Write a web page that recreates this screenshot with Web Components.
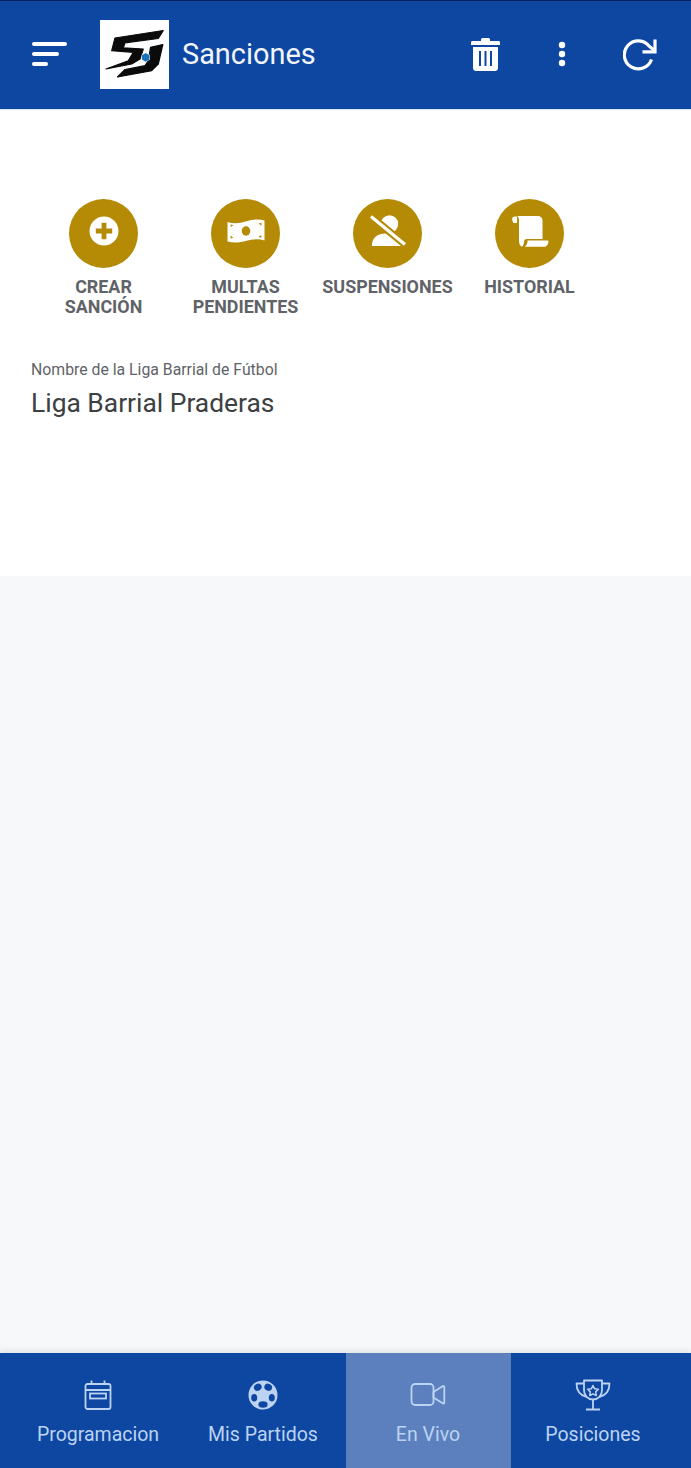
<!DOCTYPE html>
<html lang="es">
<head>
<meta charset="utf-8">
<title>Sanciones</title>
<style>
  html, body { margin: 0; height: 100%; }
  body {
    display: flex;
    flex-direction: column;
    height: 1468px;
    overflow: hidden;
    background: #f7f8fa;
    font-family: Roboto, "Liberation Sans", sans-serif;
  }
</style>
</head>
<body>
  <app-header title-text="Sanciones"></app-header>

  <main-panel>
    <action-list>
      <action-button icon="plus">CREAR<br>SANCIÓN</action-button>
      <action-button icon="money">MULTAS<br>PENDIENTES</action-button>
      <action-button icon="user-off">SUSPENSIONES</action-button>
      <action-button icon="scroll">HISTORIAL</action-button>
    </action-list>
    <league-info label="Nombre de la Liga Barrial de Fútbol" value="Liga Barrial Praderas"></league-info>
  </main-panel>

  <tab-bar>
    <tab-item icon="calendar">Programacion</tab-item>
    <tab-item icon="ball">Mis Partidos</tab-item>
    <tab-item icon="video" active>En Vivo</tab-item>
    <tab-item icon="trophy">Posiciones</tab-item>
  </tab-bar>

<script>
// Icons used by the action buttons and the tab bar.
const icons = {
  plus: `<svg viewBox="0 0 30 30" width="30" height="30">
      <circle cx="15" cy="15" r="14.5" fill="#fff"/>
      <path d="M12.6 6.8h4.8v5.8h5.8v4.8h-5.8v5.8h-4.8v-5.8H6.8v-4.8h5.8z" fill="#b58a05"/>
    </svg>`,
  money: `<svg viewBox="0 0 38 24" width="38" height="24">
      <path d="M.5 3C7 5 13 4.200 19.500 2.200 26 .3 32 -.2 37.500 1.500V21.500C32 19.500 26 20 19.500 21.800 13 23.700 7 24.300 .5 22.500z" fill="#fff"/>
      <ellipse cx="19" cy="12" rx="4.300" ry="4.700" fill="#b58a05"/>
      <path d="M3.500 5.500l3 .5-2.600 2zM34.500 3.800v3L31.700 4.600zM3.500 19.500v-3l2.800 2.300zM34.500 18.800l-3-.9 2.600-2z" fill="#b58a05"/>
    </svg>`,
  'user-off': `<svg viewBox="0 0 38 32" width="38" height="32">
      <circle cx="20.500" cy="9" r="8.700" fill="#fff"/>
      <path d="M3 31c-.6-7.500 5-12.500 13-12.500h9c6 0 10 5 10 12.500z" fill="#fff"/>
      <path d="M1 .7l36 29.600" stroke="#b58a05" stroke-width="7.500" fill="none"/>
      <path d="M2 1.500l34 28" stroke="#fff" stroke-width="3.200" fill="none"/>
    </svg>`,
  scroll: `<svg viewBox="0 0 38 32" width="38" height="32">
      <path d="M1.200 3C2 1.500 4 1 6 1.800V8H2.500C1.500 6.800 1 4.500 1.200 3z" fill="#fff"/>
      <path d="M6 1h21c2.500 0 4.500 2 4.500 4.500V24H16c-2 0-3 1.200-3 3 0 1.700-.6 3.500-2 4.800-1.800-.8-3-3-3-5.500V5.500C8 3.500 7.500 2 6 1z" fill="#fff"/>
      <path d="M16.500 25.500h20.800c.7 2.800-1.300 6.300-4.300 6.300H13.700c2.200-1.500 3-3.700 2.800-6.300z" fill="#fff"/>
    </svg>`,
  calendar: `<svg viewBox="0 0 28 32" width="28" height="32" fill="none" stroke="currentColor" stroke-width="1.800">
      <rect x="1.500" y="5" width="25" height="25" rx="2"/>
      <path d="M7.500 1.500V5M20.500 1.500V5M1.500 11h25"/>
      <rect x="6" y="14.500" width="16" height="5"/>
    </svg>`,
  ball: `<svg viewBox="0 0 30 30" width="30" height="30">
      <circle cx="15" cy="15" r="14.500" fill="currentColor"/>
      <g fill="#0e47a1">
        <ellipse cx="15" cy="24.500" rx="4.600" ry="3.300"/>
        <ellipse cx="6.200" cy="17.800" rx="3" ry="3.800"/>
        <ellipse cx="9.800" cy="7.200" rx="4" ry="3.400" transform="rotate(-30 9.800 7.200)"/>
        <ellipse cx="20.200" cy="7.200" rx="4" ry="3.400" transform="rotate(30 20.200 7.200)"/>
        <ellipse cx="23.800" cy="17.800" rx="3" ry="3.800"/>
      </g>
    </svg>`,
  video: `<svg viewBox="0 0 36 26" width="36" height="26" fill="none" stroke="currentColor" stroke-width="1.800" stroke-linejoin="round">
      <rect x="1.500" y="2" width="22" height="21" rx="3.500"/>
      <path d="M23.500 10l9.500-6a1 1 0 0 1 1.300 1v15.500a1 1 0 0 1-1.300 1l-9.500-6z"/>
    </svg>`,
  trophy: `<svg viewBox="0 0 36 32" width="36" height="32" fill="none" stroke="currentColor" stroke-width="1.800" stroke-linejoin="round">
      <path d="M9 1.500h18v9.500c0 5.500-3.800 9.500-9 9.500s-9-4-9-9.500z"/>
      <path d="M9 4.500H1.500c0 6.500 3 11.500 10 13.500M27 4.500h7.500c0 6.500-3 11.500-10 13.500"/>
      <path d="M18 20.500v9.500M11 30.500h14"/>
      <path d="M18 6.500l1.700 3.300 3.700.5-2.700 2.600.6 3.600-3.300-1.700-3.300 1.700.6-3.600-2.700-2.600 3.700-.5z" stroke-width="1.500"/>
    </svg>`
}

customElements.define('app-header',
  /**
   * The blue bar at the top, with menu, logo, title and actions.
   */
  class extends HTMLElement {
    /**
     * Creates the shadow root and fills it.
     */
    constructor () {
      super()
      this.attachShadow({ mode: 'open' }).innerHTML = `
        <style>
          :host {
            display: flex;
            align-items: center;
            flex: none;
            box-sizing: border-box;
            height: 110px;
            padding-bottom: 2px;
            background: #0e47a1;
            border-top: 1px solid #0a1f5c;
            border-bottom: 1px solid #d5e1f2;
            color: #fff;
          }
          .menu { width: 36px; margin-left: 32px; display: flex; flex-direction: column; gap: 6px; }
          .menu i { display: block; height: 4px; border-radius: 2px; background: #fff; }
          .menu i:nth-child(1) { width: 35px; }
          .menu i:nth-child(2) { width: 27px; }
          .menu i:nth-child(3) { width: 16px; }
          .logo { width: 69px; height: 69px; margin-left: 32px; background: #fff; flex: none; }
          .logo svg { display: block; }
          h1 { margin: 0 0 0 13px; font: 400 28.900px Roboto, sans-serif; flex: 1; color: #f2f6fc; }
          .actions { display: flex; align-items: center; }
          .actions svg { display: block; }
          .trash { margin-right: 58px; }
          .dots { margin-right: 57px; }
          .reload { margin-right: 34px; }
        </style>
        <div class="menu"><i></i><i></i><i></i></div>
        <div class="logo">
          <svg viewBox="0 0 69 69" width="69" height="69">
            <g fill="#0b0b0b" stroke="#0b0b0b" stroke-width="1.200" stroke-linejoin="round">
              <path d="M15 18L63.300 10.500 58.300 18.500 25 22.800 23.300 27.800 43.300 29 40 39 31.700 44 6 49 28.300 40.700 33.300 32.300 11.700 30.700z"/>
              <path d="M50.500 27.300L62.800 24.500 58.300 44 51.700 50.700 17.500 57 25 49.500 45 45.700 48.500 40.700z"/>
            </g>
            <path d="M45.700 32.500l4.200 2.400v4.800l-4.200 2.400-4.200-2.400v-4.800z" fill="#fff"/>
            <path d="M45.700 33l3.800 2.200v4.300l-3.800 2.200-3.800-2.200v-4.300z" fill="#1a74bb"/>
          </svg>
        </div>
        <h1></h1>
        <div class="actions">
          <svg class="trash" viewBox="0 0 29 34" width="29" height="34">
            <path d="M10 2.500C10 1.500 11 1 12 1h5c1 0 2 .5 2 1.500V4h8.500c.8 0 1.500.5 1.500 1.500V8H0V5.500C0 4.500.7 4 1.500 4H10z" fill="#fff"/>
            <path d="M2 10h25v21c0 1.700-1.300 3-3 3H5c-1.700 0-3-1.300-3-3z" fill="#fff"/>
            <path d="M9 14v15M14.500 14v15M20 14v15" stroke="#0e47a1" stroke-width="2" fill="none"/>
          </svg>
          <svg class="dots" viewBox="0 0 8 26" width="8" height="26" fill="#fff">
            <circle cx="4" cy="4" r="3.200"/><circle cx="4" cy="13" r="3.200"/><circle cx="4" cy="22" r="3.200"/>
          </svg>
          <svg class="reload" viewBox="0 0 34 33" width="34" height="33" fill="none" stroke="#fff" stroke-width="3.200">
            <path d="M28.500 21.500A14 14 0 1 1 26.500 8.500L32 13"/>
            <path d="M32 1.500V13.800H19.500"/>
          </svg>
        </div>`
      this.shadowRoot.querySelector('h1').textContent = this.getAttribute('title-text')
    }
  }
)

customElements.define('main-panel',
  /**
   * The white panel below the header.
   */
  class extends HTMLElement {
    /**
     * Creates the shadow root and fills it.
     */
    constructor () {
      super()
      this.attachShadow({ mode: 'open' }).innerHTML = `
        <style>
          :host {
            display: block;
            flex: none;
            box-sizing: border-box;
            height: 466px;
            padding-top: 89px;
            background: #fff;
          }
        </style>
        <slot></slot>`
    }
  }
)

customElements.define('action-list',
  /**
   * The row of round action buttons.
   */
  class extends HTMLElement {
    /**
     * Creates the shadow root and fills it.
     */
    constructor () {
      super()
      this.attachShadow({ mode: 'open' }).innerHTML = `
        <style>
          :host {
            display: grid;
            grid-template-columns: repeat(4, 142px);
            padding-left: 32.500px;
            height: 160px;
          }
        </style>
        <slot></slot>`
    }
  }
)

customElements.define('action-button',
  /**
   * A gold round icon with a caption below it.
   */
  class extends HTMLElement {
    /**
     * Creates the shadow root and fills it.
     */
    constructor () {
      super()
      this.attachShadow({ mode: 'open' }).innerHTML = `
        <style>
          :host {
            display: flex;
            flex-direction: column;
            align-items: center;
            font: 700 17.900px/20px Roboto, sans-serif;
            color: #5f6368;
            text-align: center;
          }
          .circle {
            box-sizing: border-box;
            width: 69px;
            height: 69px;
            margin-bottom: 9px;
            padding-bottom: 6px;
            border-radius: 50%;
            background: #b58a05;
            display: flex;
            align-items: center;
            justify-content: center;
          }
          svg { display: block; }
        </style>
        <div class="circle">${icons[this.getAttribute('icon')]}</div>
        <div><slot></slot></div>`
    }
  }
)

customElements.define('league-info',
  /**
   * Shows the league label and its name.
   */
  class extends HTMLElement {
    /**
     * Creates the shadow root and fills it.
     */
    constructor () {
      super()
      this.attachShadow({ mode: 'open' }).innerHTML = `
        <style>
          :host { display: block; padding: 1px 0 0 31px; }
          .label { font: 400 15.800px/20px Roboto, sans-serif; color: #5f6368; }
          .value { margin-top: 8px; font: 400 26.400px/30px Roboto, sans-serif; color: #3c4043; }
        </style>
        <div class="label"></div>
        <div class="value"></div>`
      this.shadowRoot.querySelector('.label').textContent = this.getAttribute('label')
      this.shadowRoot.querySelector('.value').textContent = this.getAttribute('value')
    }
  }
)

customElements.define('tab-bar',
  /**
   * The navigation bar at the bottom.
   */
  class extends HTMLElement {
    /**
     * Creates the shadow root and fills it.
     */
    constructor () {
      super()
      this.attachShadow({ mode: 'open' }).innerHTML = `
        <style>
          :host {
            display: grid;
            grid-template-columns: repeat(4, 165px);
            box-sizing: border-box;
            height: 115px;
            margin-top: auto;
            padding-left: 15.500px;
            flex: none;
            background: #0e47a1;
            box-shadow: 0 -2px 6px rgba(0, 0, 0, .1);
          }
        </style>
        <slot></slot>`
    }
  }
)

customElements.define('tab-item',
  /**
   * One entry of the tab bar.
   */
  class extends HTMLElement {
    /**
     * Creates the shadow root and fills it.
     */
    constructor () {
      super()
      this.attachShadow({ mode: 'open' }).innerHTML = `
        <style>
          :host {
            display: flex;
            flex-direction: column;
            align-items: center;
            color: #bcd3f3;
            font: 400 19.500px/24px Roboto, sans-serif;
          }
          :host([active]) { background: #5b80bd; }
          .icon { height: 34px; margin-top: 25px; margin-bottom: 11px; display: flex; align-items: center; justify-content: center; }
          svg { display: block; }
        </style>
        <div class="icon">${icons[this.getAttribute('icon')]}</div>
        <slot></slot>`
    }
  }
)
</script>
</body>
</html>
